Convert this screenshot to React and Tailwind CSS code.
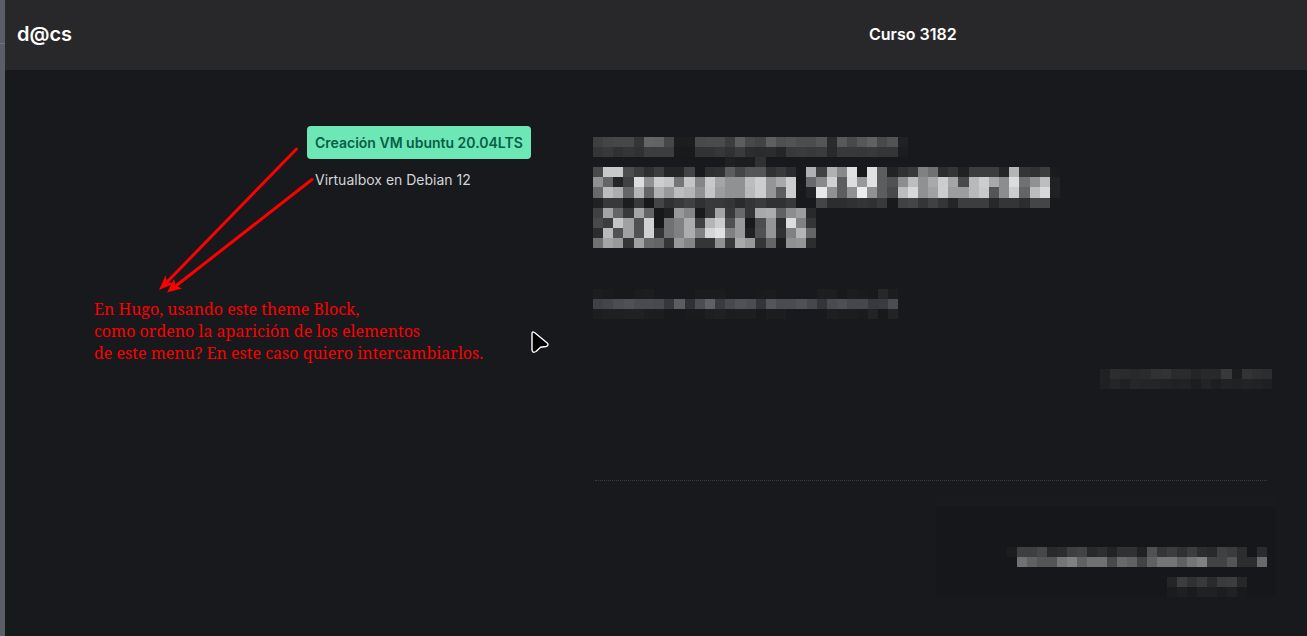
import React from "react";

// Each row lists two-digit grey levels, one per mosaic cell; ".." leaves a cell empty.
const TITLE = [
  "3e 44 46 46 34 64 62 46 1c 1c 48 4a 4a 3c 5c 48 42 5e 4e 52 4c 4c 54 2a 58 48 56 60 48 52 20",
  "34 38 30 34 30 3c 3c 3c 19 19 32 32 36 30 3a 2c 2a 2c 24 38 3a 38 3a 28 38 38 36 38 34 34 1c",
  ".. .. .. .. .. .. .. .. .. .. .. .. .. 20 1c 1c 30",
  "48 c8 c8 4c 3c 2e 3c 24 24 42 .. 2e 30 5c 44 54 54 30 38 2c .. b0 40 b0 88 e0 18 e0 5c 22 30 38 80 70 2c 34 20 3c 3c 3c 24 b4 34 30 3c 1a",
  "90 64 24 40 dc 90 cc c4 74 c4 84 c8 a4 90 90 bc cc 94 a8 cc .. 68 88 d0 5c dc 98 e0 5c 50 8c bc 90 a8 cc a4 48 b8 cc a8 8c dc 70 90 bc 20",
  "68 bc ac 64 b4 64 b0 98 bc b4 90 c4 9c 90 90 b8 cc 94 5c cc .. 22 e8 90 5c 90 ec 90 5c 48 bc d8 90 a0 cc 9c 9c b8 c8 54 8c cc 64 bc d8 20",
  "20 38 38 1c 38 17 44 30 38 40 30 38 38 34 2a 34 3a 30 30 38 .. .. 44 2c 2c 30 34 30 38 19 40 44 34 40 34 24 3c 3c 3c 26 34 34 2c 44 44",
  "40 a4 64 38 a4 64 17 20 98 84 19 38 a4 38 68 34 a8 ac 60 8c 9c 28",
  "48 3c c4 a0 50 d0 17 70 80 ac 40 b4 cc 50 98 18 4c 94 2c dc 80 34",
  "2c b8 50 a0 50 d0 34 70 80 ac 80 d4 e0 80 98 20 50 94 30 80 b4 64",
  "70 a4 98 34 a0 68 64 34 98 84 34 34 90 38 a8 98 34 64 1c 90 94 2c",
];

const META = [
  "1c 1a .. .. 1b 1c .. .. .. .. 1b 1b 1b .. .. .. 1a 1b .. .. .. .. 1d 1d .. 1c 1a .. 27 1c",
  "40 44 4c 50 4a 4a 48 36 5c 30 4c 60 3a 48 50 4c 34 54 4a 4a 50 46 34 4a 4e 46 46 38 3a 4c",
  "1c 1e 1e 20 20 1c 1c .. .. 1a 1a 1e 20 1c 1d 1d .. 1c 1c .. .. .. .. 1e 1c 1c 1a 22 .. 22",
];

const EDIT = [
  "20 2c 2a 28 2a 30 32 2a 2a 24 28 28 38 1c 32 2e 2c",
  "1f 24 20 26 24 24 22 20 21 1c 23 1d 22 20 22 21 1f",
];

const FOOTER = [
  "1c 3e 3e 46 28 2c 3e 42 28 2e 22 30 30 20 50 34 3c 30 3c 2c 28 40 3a 2c .. 2a",
  ".. 70 60 54 54 74 80 60 70 70 48 68 60 42 60 74 74 60 74 80 42 42 54 2c 2c 68",
  "",
  ".. .. .. .. .. .. .. .. .. .. .. .. .. .. .. .. 24 3c 30 38 2a 3a 3c 26",
  ".. .. .. .. .. .. .. .. .. .. .. .. .. .. .. .. 1b 1e 1a 20 20 1c 20 19",
];

function Mosaic({ rows, columns, tint = 2, className }) {
  return (
    <svg
      className={className}
      viewBox={`0 0 ${columns} ${rows.length}`}
      preserveAspectRatio="none"
      shapeRendering="crispEdges"
      aria-hidden="true"
    >
      {rows.flatMap((row, y) =>
        row.split(" ").map((level, x) => {
          if (!level || level === "..") return null;
          const v = parseInt(level, 16);
          const blue = v + (v < 44 ? 3 : tint);
          return (
            <rect
              key={`${x}-${y}`}
              x={x}
              y={y}
              width="1"
              height="1"
              fill={`rgb(${v},${v + 1},${blue})`}
            />
          );
        })
      )}
    </svg>
  );
}

function Arrows() {
  return (
    <svg
      className="pointer-events-none absolute left-[150px] top-[70px]"
      width="170"
      height="160"
      viewBox="155 140 170 160"
      fill="#ff0000"
      stroke="#ff0000"
      aria-hidden="true"
    >
      <path d="M296.500 149 168 281M312 179.500 177 285" strokeWidth="3" strokeLinecap="round" fill="none" />
      <path d="M159 290 165.500 275.500 167 282 174 283.500Z" stroke="none" />
      <path d="M167 292.500 174 279 175.500 285.500 182 288.500Z" stroke="none" />
    </svg>
  );
}

function Pointer() {
  return (
    <svg
      className="pointer-events-none absolute left-[525px] top-[260px]"
      width="20"
      height="24"
      viewBox="530 330 20 24"
      aria-hidden="true"
    >
      <path
        d="M532 333.500Q532 331.200 534.500 332.500L547.500 343.200Q549 345.500 546 346.500L540.500 347.300 536 351.500Q532.500 353.500 532 350Z"
        fill="#000"
        stroke="#fff"
        strokeWidth="1.400"
        strokeLinejoin="round"
      />
    </svg>
  );
}

export default function App() {
  return (
    <div className="flex min-h-screen bg-[#17191c] font-['Inter',sans-serif]">
      <div className="w-[5px] shrink-0 bg-[#5c5e67]">
        <div className="h-11 border-b border-[#70727a]" />
      </div>
      <div className="min-w-0 flex-1">
        <header className="grid h-[70px] grid-cols-3 items-center bg-[#28282a] px-3 pb-0.5 text-white">
          <a href="#inicio" className="col-span-2 justify-self-start text-xl font-semibold">
            d@cs
          </a>
          <a href="#curso" className="justify-self-start text-base font-semibold">
            Curso 3182
          </a>
        </header>
        <div className="flex">
          <aside className="relative w-[588px] shrink-0 pt-14">
            <nav className="ml-[302px] flex flex-col items-start gap-1 text-sm">
              <a
                href="#ubuntu"
                className="rounded bg-[#6ee7b7] px-2 py-1.5 font-semibold leading-[21px] text-[#065f46]"
              >
                Creación VM ubuntu 20.04LTS
              </a>
              <a href="#virtualbox" className="px-2 py-1.5 leading-[21px] text-[#d4d4d8]">
                Virtualbox en Debian 12
              </a>
            </nav>
            <p className="ml-[89px] mt-[102px] whitespace-nowrap font-['Noto_Serif','Droid_Serif','DejaVu_Serif_Condensed','DejaVu_Serif',serif] text-base leading-[22px] text-[#fa0000]">
              En Hugo, usando este theme Block,
              <br />
              como ordeno la aparición de los elementos
              <br />
              de este menu? En este caso quiero intercambiarlos.
            </p>
            <Arrows />
            <Pointer />
          </aside>
          <main className="min-w-0 flex-1 pt-[67px]">
            <article>
              <Mosaic rows={TITLE} columns={46} className="h-[111px] w-[467px]" />
              <Mosaic rows={META} columns={30} tint={6} className="mt-[41px] h-[30px] w-[305px]" />
              <Mosaic rows={EDIT} columns={17} tint={3} className="ml-auto mr-[35px] mt-[50px] h-5 w-[172px]" />
            </article>
            <hr className="ml-0.5 mr-10 mt-[91px] border-0 border-t border-dotted border-[#3a3c40]" />
            <footer className="ml-auto mr-[31px] mt-4 w-[340px] border-t-10 border-[#191a1d] bg-[#16171a] pr-[9px] pt-10">
              <Mosaic rows={FOOTER} columns={26} className="ml-auto h-[50px] w-[260px]" />
            </footer>
          </main>
        </div>
      </div>
    </div>
  );
}
